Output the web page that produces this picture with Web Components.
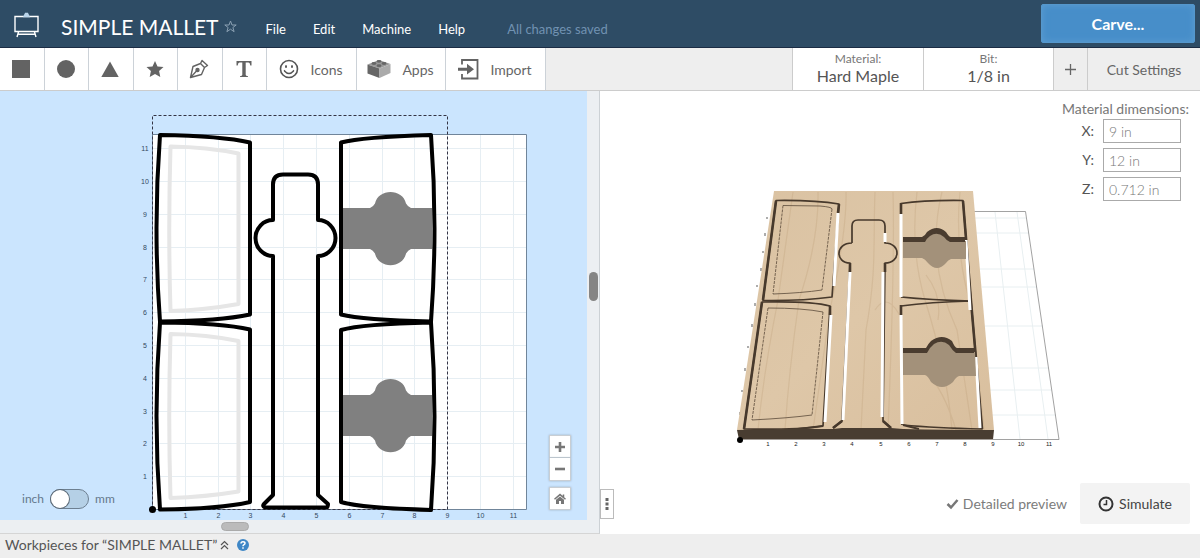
<!DOCTYPE html>
<html lang="en">
<head>
<meta charset="utf-8">
<meta name="viewport" content="width=device-width, initial-scale=1">
<title>SIMPLE MALLET</title>
<style>
html, body { margin: 0; height: 100%; }
body { font-family: Lato, "Liberation Sans", sans-serif; font-size: 14px; color: #5a5a5a; background: #fff; }
</style>
</head>
<body>
<carve-app></carve-app>
<script>
const base = `<style>
*, *::before, *::after { box-sizing: border-box; }
button { font: inherit; color: inherit; background: none; border: 0; padding: 0; margin: 0; cursor: pointer; }
svg { display: block; }
</style>`;

function define(name, html) {
  const template = document.createElement('template');
  template.innerHTML = base + html;
  customElements.define(name, class extends HTMLElement {
    constructor() {
      super();
      this.attachShadow({ mode: 'open' }).append(template.content.cloneNode(true));
    }
  });
}

define('tool-button', `<style>
:host { display: block; border-right: 1px solid #ccd2d8; background: #fff; }
button { width: 100%; height: 100%; display: flex; align-items: center; justify-content: center; gap: 11px; padding-right: 1px; }
</style><button type="button"><slot></slot></button>`);

define('setting-cell', `<style>
:host { display: block; background: #fff; border-left: 1px solid #ccc; }
button { width: 100%; height: 100%; display: flex; flex-direction: column; align-items: center; justify-content: center; }
.name { font-size: 12px; line-height: 14px; color: #777; }
.value { font-size: 16px; line-height: 20px; color: #555; }
</style><button type="button"><span class="name"><slot name="name"></slot></span><span class="value"><slot></slot></span></button>`);

define('app-header', `<style>
:host { display: flex; align-items: center; height: 48px; background: #2e4c65; border-bottom: 1px solid #1b2c44; color: #fff; padding-right: 5px; }
.logo { margin: 2px 22px 0 14px; }
h1 { font-size: 21px; line-height: 28px; font-weight: 400; margin: 6px 6px 0 0; }
.star { margin-top: 6px; }
nav { display: flex; gap: 27px; margin: 10px 0 0 28px; font-size: 13px; line-height: 18px; }
.saved { margin: 10px 0 0 42px; font-size: 13px; line-height: 18px; color: #7192b2; }
.carve { margin: 0 0 0 auto; width: 154px; height: 39px; background: #478ec9; border: 1px solid #5597cc; border-radius: 2px; font-size: 16px; font-weight: 700; box-shadow: inset 0 0 7px #5c9dd2; }
</style>
<svg class="logo" width="25" height="26" viewBox="0 0 25 26" fill="none" stroke="#fff" stroke-width="1.4"><path d="M1 4.500H24V19.500H1ZM4.500 20L3 25M20.500 20L22 25M4.500 22.300H20.500"/><path d="M10 4.500L11.500 1.500H13.500L15 4.500Z" fill="#b9d4ea" stroke="#b9d4ea"/></svg>
<h1>SIMPLE MALLET</h1>
<svg class="star" width="13" height="13" viewBox="0 0 13 13" fill="none" stroke="#8aa0b3"><path d="M6.500 1L8 5H12.200L8.900 7.500L10.100 11.700L6.500 9.200L2.900 11.700L4.100 7.500L.8 5H5Z"/></svg>
<nav><button type="button">File</button><button type="button">Edit</button><button type="button">Machine</button><button type="button">Help</button></nav>
<span class="saved">All changes saved</span>
<button type="button" class="carve">Carve...</button>`);

define('tool-bar', `<style>
:host { display: flex; height: 43px; background: #eee; border-bottom: 1px solid #ccc; color: #666; }
.shapes { display: grid; grid-template-columns: repeat(6, 1fr); width: 267px; }
.icons { width: 90px; } .apps { width: 89px; } .import { width: 100px; }
.icons, .apps, .import { flex: none; }
.right { margin-left: auto; display: flex; }
setting-cell { width: 130px; }
.right setting-cell:first-child { width: 131px; }
.add { width: 34px; border-left: 1px solid #ccc; display: grid; place-items: center; }
.cut { width: 113px; border-left: 1px solid #ccc; }
</style>
<div class="shapes">
<tool-button><svg width="18" height="18"><path fill="#636363" d="M0 0H18V18H0Z"/></svg></tool-button>
<tool-button><svg width="18" height="18"><circle cx="9" cy="9" r="9" fill="#636363"/></svg></tool-button>
<tool-button><svg width="18" height="18"><path fill="#636363" d="M9 1.500L17.700 17H.3Z"/></svg></tool-button>
<tool-button><svg width="18" height="18"><path fill="#636363" d="M9 1L11.500 6.400L17.500 7L13.100 11L14.300 17L9 14L3.700 17L4.900 11L.5 7L6.500 6.400Z"/></svg></tool-button>
<tool-button><svg width="20" height="20" viewBox="0 0 20 20" fill="none" stroke="#636363" stroke-width="1.400" stroke-linejoin="round"><path d="M1.500 18.500L4 7.500L11.500 4.500L15.500 8.500L12.500 15.500ZM1.500 18.500L7.500 12M11.500 4.500L13 1.500L18.500 6.500L15.500 8.500"/><circle cx="8.500" cy="11" r="1.500" fill="#636363"/></svg></tool-button>
<tool-button><svg width="16" height="18" viewBox="0 0 16 18"><path fill="#636363" d="M.5 1H15.500V5.500H14.300Q14 2.500 12.500 2.500H9.700V14.800Q9.700 16.200 12 16.200V17H4V16.200Q6.300 16.200 6.300 14.800V2.500H3.500Q2 2.500 1.700 5.500H.5Z"/></svg></tool-button>
</div>
<tool-button class="icons"><svg width="20" height="20" viewBox="0 0 20 20" fill="none" stroke="#555" stroke-width="1.600"><circle cx="10" cy="10" r="8.500"/><path d="M5.500 12Q10 17 14.500 12M5 12.300L6.200 11.500M15 12.300L13.800 11.500"/><ellipse cx="7" cy="7.500" rx="1" ry="1.500" fill="#555" stroke="none"/><ellipse cx="13" cy="7.500" rx="1" ry="1.500" fill="#555" stroke="none"/></svg><span>Icons</span></tool-button>
<tool-button class="apps"><svg width="24" height="20" viewBox="0 0 24 20"><path fill="#999" d="M.5 5.500L12 1L23.500 5L12.500 9.500Z"/><path fill="#666" d="M.5 5.500L12.500 9.500V19L.5 14.500Z"/><path fill="#aaa" d="M12.500 9.500L23.500 5V14L12.500 19Z"/><g fill="#666"><ellipse cx="7" cy="4.500" rx="2.500" ry="1.400"/><ellipse cx="12" cy="6.700" rx="2.500" ry="1.400"/><ellipse cx="12" cy="2.300" rx="2.500" ry="1.400"/><ellipse cx="17" cy="4.500" rx="2.500" ry="1.400"/></g></svg><span>Apps</span></tool-button>
<tool-button class="import"><svg width="21" height="22" viewBox="0 0 21 22"><path fill="none" stroke="#636363" stroke-width="1.800" d="M4 6.500V2H19.500V20.500H4V16"/><path fill="#636363" d="M0 9.700H9V5.800L16 11.200L9 16.500V12.700H0Z"/></svg><span>Import</span></tool-button>
<div class="right">
<setting-cell><span slot="name">Material:</span>Hard Maple</setting-cell>
<setting-cell><span slot="name">Bit:</span>1/8 in</setting-cell>
<button type="button" class="add" aria-label="Add bit"><svg width="13" height="13"><path d="M6.500 1V12M1 6.500H12" stroke="#666" stroke-width="1.300"/></svg></button>
<button type="button" class="cut">Cut Settings</button>
</div>`);

define('unit-switch', `<style>
:host { display: block; }
label { display: flex; align-items: center; gap: 6px; font-size: 12px; line-height: 18px; color: #65788c; }
input { appearance: none; margin: 0; width: 39px; height: 20px; border: 1px solid #6d7f90; border-radius: 10px; background: #b5d0e6; display: flex; }
input::before { content: ""; width: 18px; height: 18px; border-radius: 50%; background: #fff; box-shadow: 0 0 0 1px #5d6b78; }
input:checked { justify-content: flex-end; }
</style><label>inch <input type="checkbox" role="switch"> mm</label>`);

define('zoom-controls', `<style>
:host { display: grid; gap: 6px; width: 22px; }
div { display: grid; }
button { height: 23px; width: 22px; display: grid; place-items: center; background: #fff; border: 1px solid #c9ced3; box-shadow: 0 0 2px #9fb1c2; }
div button + button { border-top: 0; }
</style>
<div><button type="button" aria-label="Zoom in"><svg width="12" height="12"><path d="M6 1V11M1 6H11" stroke="#777" stroke-width="2.600"/></svg></button>
<button type="button" aria-label="Zoom out"><svg width="12" height="12"><path d="M1 6H11" stroke="#777" stroke-width="2.600"/></svg></button></div>
<button type="button" aria-label="Home view"><svg width="12" height="12" viewBox="0 0 12 12"><path d="M.5 6.300L6 1.600L11.500 6.300M9.500 1.500V4" fill="none" stroke="#777" stroke-width="1.500"/><path d="M2 6.700L6 3.400L10 6.700V11H7V8H5V11H2Z" fill="#777"/></svg></button>`);

define('design-canvas', `<style>
:host { display: grid; grid-template: minmax(0, 1fr) 13px / minmax(0, 1fr) 12px; background: #eceff2; border-right: 1px solid #ccd1d5; border-bottom: 1px solid #d5d5d5; min-height: 0; }
.view { position: relative; background: #cbe5fe; min-height: 0; }
.view > svg { width: 100%; height: 100%; }
text { font: 7px "Liberation Sans", sans-serif; fill: #34495e; text-anchor: middle; }
unit-switch { position: absolute; left: 22px; bottom: 11px; }
zoom-controls { position: absolute; right: 16px; bottom: 10px; }
.vbar { display: flex; justify-content: center; align-items: center; }
.hbar { display: flex; justify-content: center; align-items: center; grid-column: 1; }
.vbar i { width: 9px; height: 29px; border-radius: 5px; background: #858585; margin-bottom: 39px; }
.hbar i { width: 28px; height: 9px; border-radius: 5px; background: #bbb; border: 1px solid #aaa; margin-right: 117px; }
</style>
<div class="view">
<svg viewBox="0 91 587 429" role="img" aria-label="Mallet parts layout">
<path fill="#fff" d="M152.500 134.500H526.500V509.500H152.500Z"/>
<path id="grid" stroke="#e6eef3" stroke-width="1" fill="none"/>
<path fill="none" stroke="#70859a" d="M152.500 134.500H526.500V509.500H152.500Z"/>
<path fill="none" stroke="#334" stroke-dasharray="3 2" d="M152.500 509.500V115.500H447.500V509.500Z"/>
<g fill="none" stroke="#e6e6e6" stroke-width="4" stroke-linejoin="round">
<path d="M170.500 146.500Q207 147 238.500 153.500V304Q205 310 170.500 311Q168 230 170.500 146.500Z"/>
<path d="M170.500 334Q207 334.500 238.500 341V491.500Q205 497 170.500 498Q168 417 170.500 334Z"/></g>
<g fill="#808080">
<path id="pocket" d="M342 208H370Q373 207 375 203.500C378 188 403 188 406 203.500Q408 207 411 208H432V249H411Q408 250 406 253.500C403 269 378 269 375 253.500Q373 250 370 249H342Z"/>
<use href="#pocket" y="187"/></g>
<g fill="none" stroke="#000" stroke-width="4" stroke-linejoin="round">
<path d="M160 135Q222 136 250 142.500V314.500Q220 321 160 321.500Q153 228 160 135Z"/>
<path d="M160 322.500Q222 323 250 329.500V502Q220 509 160 509.500Q153 416 160 322.500Z"/>
<path d="M341 142.500Q362 137 431 135Q438 228 431 321.500Q362 320 341 314.500Z"/>
<path d="M341 330Q362 324 431 322.500Q438 416 431 510Q362 508 341 502Z"/>
<path d="M273 220V184.500Q273 174.500 283 174.500H308Q318 174.500 318 184.500V220A17.500 18 0 0 1 318 256V495L328 504Q328 507.500 326 507.500H265Q262 506 264 504L273 495V256A17.500 18 0 0 1 273 220Z"/></g>
<circle cx="152.500" cy="509.500" r="3.500"/>
<g id="labels"></g>
</svg>
<unit-switch></unit-switch><zoom-controls></zoom-controls>
</div>
<div class="vbar"><i></i></div><div class="hbar"><i></i></div>`);

define('dimension-field', `<style>
:host { display: block; }
label { display: flex; align-items: center; gap: 9px; justify-content: flex-end; color: #555; font-size: 14px; line-height: 18px; }
input { width: 78px; height: 24px; border: 1px solid #aaa; background: #fff; padding: 0 5px; font: 300 14px Lato, sans-serif; color: #777; }
</style><label><span></span><input type="text"></label>`);

define('preview-pane', `<style>
:host { display: block; position: relative; background: #fff; min-height: 0; }
.scene { width: 100%; height: 100%; }
.scene text { font: 6px "Liberation Sans", sans-serif; fill: #222; text-anchor: middle; }
.dims { position: absolute; top: 9px; right: 11px; display: grid; gap: 5px; }
h2 { font-size: 14px; line-height: 18px; font-weight: 400; margin: 0 0 -4px; color: #777; }
dimension-field { margin-right: 8px; }
.split { position: absolute; left: 0; bottom: 15px; width: 14px; height: 30px; border: 1px solid #bbb; background: #fff; display: grid; place-items: center; }
.actions { position: absolute; right: 10px; bottom: 10px; display: flex; align-items: center; gap: 13px; }
.detail { display: flex; align-items: center; gap: 4px; color: #7c7c7c; line-height: 18px; }
.sim { width: 110px; height: 41px; background: #f3f3f3; border-radius: 2px; color: #444; display: flex; align-items: center; justify-content: center; gap: 5px; }
</style>
<svg class="scene" viewBox="600 91 600 443" role="img" aria-label="Carved wood preview">
<defs>
<linearGradient id="wood" x2="1" y2="1"><stop offset="0" stop-color="#dac2a2"/><stop offset=".5" stop-color="#dec7a8"/><stop offset="1" stop-color="#d9bf9e"/></linearGradient>
<clipPath id="board"><path d="M774 191H973L994 430H737Z"/></clipPath>
</defs>
<g fill="none" stroke="#e8eff1" stroke-width="1"><path d="M975 218H1026M976 233H1029M980 269H1034M982 287H1037M985 326H1043M988 368H1049M990 390H1052M992 415H1056M995 212L1020 439M1017 212L1048 439"/></g>
<path d="M973 211.500H1025.500L1059 439.500H993" fill="none" stroke="#8a8a8a" stroke-width=".8"/>
<path d="M767 217v2M765 233v3M763 251v2M761 268v3M757 285v2M755 303v3M752 324v3M748 346v2M745 368v3M742 390v2M740 412v3" stroke="#777" stroke-width="1.200"/>
<path fill="url(#wood)" d="M774 191H973L994 430H737Z"/>
<g clip-path="url(#board)" fill="none" stroke="#b9986f" stroke-width="1.200" opacity=".25">
<path d="M793 192L778 300Q764 370 758 430M818 192Q819 240 799 300Q789 370 785 430M846 192Q847 230 830 310L813 430M875 192C873 240 877 270 866 330L861 430M893 192Q895 260 888 430M917 192Q910 250 925 300Q947 370 952 430M942 192Q925 260 957 330L972 430M960 192Q954 250 972 310L984 430M902 320Q888 290 875 310M926 275Q942 295 938 320M925 370Q944 390 956 430"/>
</g>
<g fill="none" stroke="#5b4a3a" stroke-width=".8"><path d="M783 205.500L820 206Q832 207 832 209M822 290Q802 293 773 294M768 308Q803 308 823 312M812 415Q790 418 752 420"/><path d="M783 205.500L773 294M832 209L822 290M768 308L752 420M823 312L812 415" stroke-dasharray="3 1"/></g>
<g fill="none" stroke="#47392c" stroke-width="1.700" stroke-linejoin="round">
<path d="M776 200.500Q815 200 839 204L832 297Q802 301 763 300.500Z"/>
<path d="M762 302Q812 301 830 306L823 426Q795 430 744 429Z"/>
<path d="M901 297V203.500Q925 200 963 200.500L971 301Q930 300 901 297"/>
<path d="M902 425L901 306Q930 302 971 301L982 429Q935 428 903 425"/>
<path d="M852 243V226Q852 220 858 220H879Q885 220 885 226V243C901 243 901 263 885 263L883 421L891 428M852 243C835 243 835 263 850 263L842 421L833 428"/>
</g>
<g fill="none" stroke="#47392c" stroke-width="2.600"><path d="M776 201L763 300M762 302L744 429M963 201L971 301L982 429M901 203V214M901 305V315M839 204L838 213M830 306V315M850 263V272M885 263V272M833 428L842 421M891 428L883 421"/><path stroke-width="2" d="M903 425L919 429M823 426L798 429"/></g>
<path d="M838 213L834 286M831 315L825 422M850 272L843 420M883 272L882 417M885 233V242M901 214V297M901 315L902 424M966 240L970 310M976 357L980 428" fill="none" stroke="#fff" stroke-width="3"/>
<path fill="#a3917a" d="M903 240H923Q925 239 927 234Q937 225 947 234Q949 240 952 241H966V259H951Q948 260 946 263Q937 273 928 263Q925 259 922 258H903Z"/>
<path fill="#4a3c2f" d="M903 237H922Q925 236 927 232Q937 224 946 232Q949 237 951 237H965V242H950Q946 240 944 237Q937 231 930 236Q926 239 925 242H903Z"/>
<path fill="#a3917a" d="M903 351H927Q929 347 932 344Q942 336 952 344Q955 350 958 352H975L976 376H959Q956 377 953 382Q942 392 931 382Q928 376 925 375H903Z"/>
<path fill="#4a3c2f" d="M903 348H926Q928 344 931 341Q942 333 952 341Q955 348 957 348H974V353H956Q952 350 949 345Q942 339 934 344Q930 347 927 353H903Z"/>
<path fill="#493d31" d="M737 430L787 429Q801 428 819 429H833L842 428H891L903 429Q945 430 994 430L993 439.500H739Z"/>
<circle cx="740" cy="440" r="3"/>
<g id="axis"></g>
</svg>
<div class="dims"><h2>Material dimensions:</h2>
<dimension-field name="X:" value="9 in"></dimension-field>
<dimension-field name="Y:" value="12 in"></dimension-field>
<dimension-field name="Z:" value="0.712 in"></dimension-field></div>
<button type="button" class="split" aria-label="Preview options"><svg width="4" height="12" fill="#666"><path d="M.5 0h3v3h-3zM.5 4.500h3v3h-3zM.5 9h3v3h-3z"/></svg></button>
<div class="actions"><span class="detail"><svg width="13" height="12"><path d="M1.500 6L5 9.500L11.500 2" fill="none" stroke="#777" stroke-width="2.500"/></svg>Detailed preview</span>
<button type="button" class="sim"><svg width="16" height="16" fill="none" stroke="#333"><circle cx="8" cy="8" r="6.500" stroke-width="2"/><path d="M8.500 4V8.500H5.500" stroke-width="1.500"/></svg>Simulate</button></div>`);

define('workpiece-bar', `<style>
:host { display: flex; align-items: center; height: 24px; box-sizing: border-box; background: #eee; padding: 0 0 2px 5px; color: #555; line-height: 18px; }
.label { display: flex; align-items: center; gap: 3px; }
.help { margin-left: 8px; }
</style>
<button type="button" class="label">Workpieces for “SIMPLE MALLET”<svg width="9" height="10" fill="none" stroke="#555" stroke-width="1.200"><path d="M1 5L4.500 1.500L8 5M1 9L4.500 5.500L8 9"/></svg></button>
<button type="button" class="help" aria-label="Help"><svg width="12" height="12" viewBox="0 0 12 12"><circle cx="6" cy="6" r="6" fill="#3f87c6"/><path d="M4 4.500Q4 2.700 6 2.700T8 4.300Q8 5.300 6.800 5.800Q6 6.200 6 7.200M6 8.200V9.700" fill="none" stroke="#fff" stroke-width="1.500"/></svg></button>`);

define('carve-app', `<style>
:host { display: grid; grid-template-rows: auto auto minmax(0, 1fr) auto; height: 100vh; }
app-header, tool-bar { box-sizing: border-box; }
main { display: grid; grid-template-columns: 1fr 1fr; min-height: 0; }
</style><app-header></app-header><tool-bar></tool-bar>
<main><design-canvas></design-canvas><preview-pane></preview-pane></main>
<workpiece-bar></workpiece-bar>`);

const app = document.querySelector('carve-app').shadowRoot;
const canvas = app.querySelector('design-canvas').shadowRoot;
const preview = app.querySelector('preview-pane').shadowRoot;

function addText(group, x, y, value) {
  const node = document.createElementNS('http://www.w3.org/2000/svg', 'text');
  node.setAttribute('x', x);
  node.setAttribute('y', y);
  node.textContent = value;
  group.append(node);
}

// Rulers and one-inch grid of the work bed
const inch = 32.8;
let grid = '';
for (let i = 1; i <= 11; i++) {
  const x = Math.round(152 + i * inch) + 0.5;
  const y = Math.round(509 - i * inch) + 0.5;
  grid += `M${x} 135V509M153 ${y}H526`;
  addText(canvas.querySelector('#labels'), x, 518, i);
  addText(canvas.querySelector('#labels'), 145, y + 2, i);
  addText(preview.querySelector('#axis'), Math.round(740 + i * 28.1), 446, i);
}
canvas.querySelector('#grid').setAttribute('d', grid);

preview.querySelectorAll('dimension-field').forEach(field => {
  field.shadowRoot.querySelector('span').textContent = field.getAttribute('name');
  field.shadowRoot.querySelector('input').value = field.getAttribute('value');
});
</script>
</body>
</html>
